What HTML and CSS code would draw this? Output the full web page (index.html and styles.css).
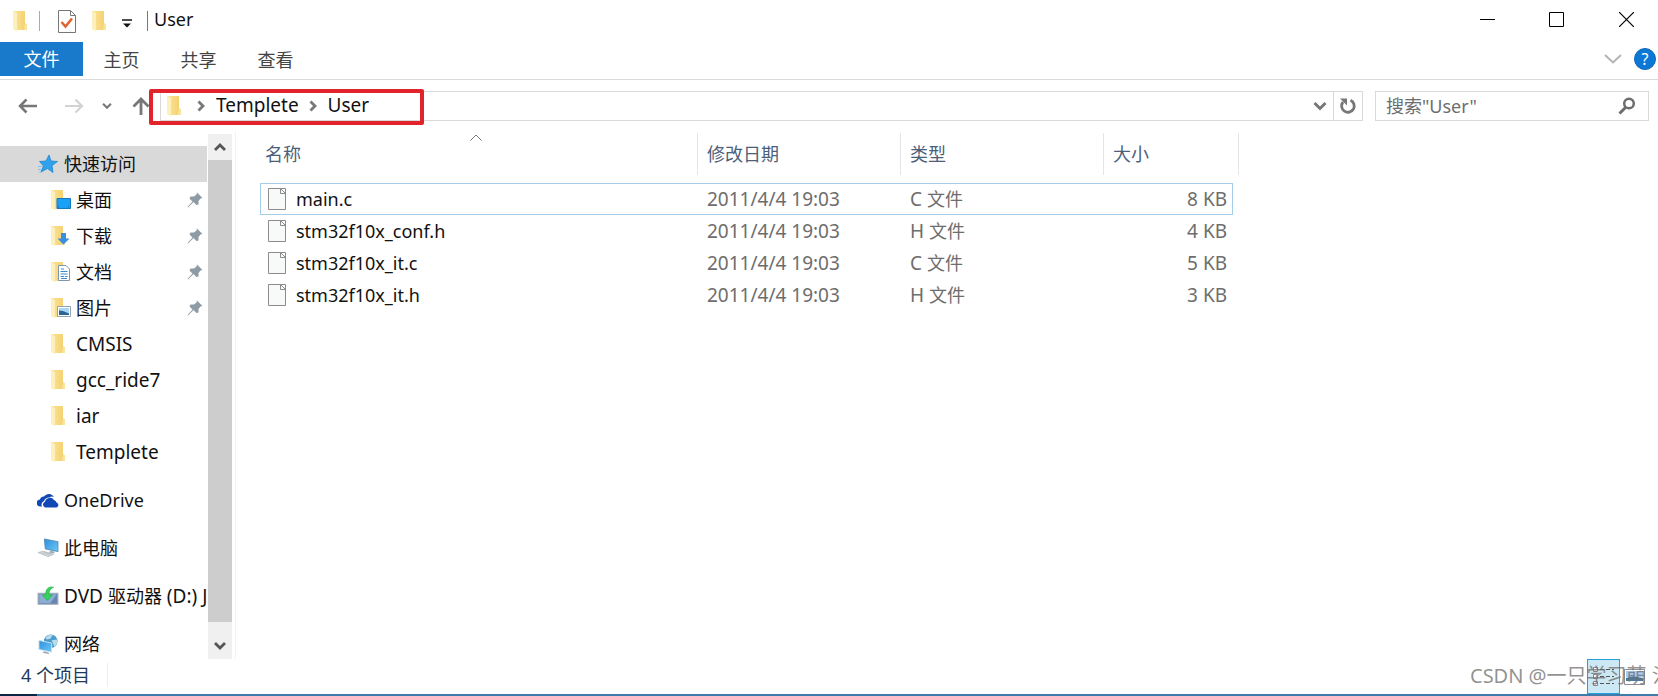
FILE: index.html
```html
<!DOCTYPE html>
<html lang="zh-CN">
<head>
<meta charset="utf-8">
<title>User</title>
<link rel="stylesheet" href="styles.css">
</head>
<body>
<svg class="defs" aria-hidden="true">
  <defs>
    <linearGradient id="gFold" x1="0" x2="1"><stop offset="0" stop-color="#fbe49a"/><stop offset="1" stop-color="#f3cf6b"/></linearGradient>
    <linearGradient id="gBlue" x1="0" x2="1" y1="0" y2="1"><stop offset="0" stop-color="#2f8fdc"/><stop offset="1" stop-color="#6cc8f5"/></linearGradient>
    <symbol id="folder" viewBox="0 0 16 22">
      <path d="M1 1H13V13L15 15V20H4L1 18Z" fill="url(#gFold)"/>
      <path d="M1 1L5 3V21.500L1 19Z" fill="#fdf0bd"/>
      <path d="M13 13L15 15V20H12Z" fill="#fae39a"/>
    </symbol>
    <symbol id="page" viewBox="0 0 18 22">
      <path d="M.5.5H12.500L17.500 5.500V21.500H.5Z" fill="#f8faf9"/>
      <path d="M12.500.5H.5V21.500H17.500V5.500M12.500.5V5.500H17.500ZM12.500.5H17.500V5.500" fill="none" stroke="#8b8b8b"/>
    </symbol>
    <symbol id="pin" viewBox="0 0 16 16">
      <path d="M10 .5L15.500 6L13.500 6.500L11.500 9L11.500 12.500L9.500 13L6.500 10L1 15.500L.5 15L5.500 9.500L2.500 6.500L3.500 4.500L7 4.500L9.500 2.500Z" fill="#8e9ba6"/>
    </symbol>
    <symbol id="chev" viewBox="0 0 12 12"><path d="M3.500 1.500L8 6L3.500 10.500" fill="none" stroke="#777" stroke-width="2.800"/></symbol>
    <symbol id="down" viewBox="0 0 14 10"><path d="M1.500 2L7 7.500L12.500 2" fill="none" stroke="currentColor" stroke-width="3"/></symbol>
  </defs>
</svg>
<div class="window">
  <header class="titlebar">
    <svg class="fold"><use href="#folder"/></svg>
    <span class="bar"></span>
    <button class="plain check" aria-label="属性"><svg width="18" height="23" viewBox="0 0 18 23"><path d="M.5.5H12.500L17.500 5.500V22.500H.5Z" fill="#fff" stroke="#777"/><path d="M12.500.5V5.500H17.500" fill="none" stroke="#777"/><path d="M3.500 12L7.500 16.500L14 8.500" fill="none" stroke="#e2622f" stroke-width="2.500"/></svg></button>
    <button class="plain newf" aria-label="新建文件夹"><svg class="fold"><use href="#folder"/></svg></button>
    <button class="plain custom" aria-label="自定义快速访问工具栏"><svg width="10" height="9" viewBox="0 0 10 9"><path d="M0 1H10" stroke="#111" stroke-width="1.500"/><path d="M1 4.500H9L5 8.500Z" fill="#111"/></svg></button>
    <span class="bar dark"></span>
    <h1>User</h1>
    <div class="caption">
      <button class="plain min" aria-label="最小化"><svg width="15" height="15"><path d="M0 7.500H15" stroke="#000"/></svg></button>
      <button class="plain max" aria-label="最大化"><svg width="15" height="15"><path d="M.5.5H14.500V14.500H.5Z" fill="none" stroke="#000"/></svg></button>
      <button class="plain close" aria-label="关闭"><svg width="15" height="15"><path d="M0 0L15 15M15 0L0 15" stroke="#000" stroke-width="1.200"/></svg></button>
    </div>
  </header>
  <nav class="ribbon">
    <button class="tab file">文件</button>
    <button class="tab">主页</button>
    <button class="tab">共享</button>
    <button class="tab">查看</button>
    <button class="plain expand" aria-label="展开功能区"><svg width="18" height="10" viewBox="0 0 18 10"><path d="M1 1L9 8.500L17 1" fill="none" stroke="#b4b4b4" stroke-width="2"/></svg></button>
    <button class="help" aria-label="帮助">?</button>
  </nav>
  <div class="navbar">
    <button class="plain back" aria-label="后退"><svg width="20" height="16" viewBox="0 0 20 16"><path d="M19 8H2M8.500 1.500L2 8L8.500 14.500" fill="none" stroke="#777" stroke-width="2.500"/></svg></button>
    <button class="plain fwd" aria-label="前进"><svg width="20" height="16" viewBox="0 0 20 16"><path d="M1 8H18M11.500 1.500L18 8L11.500 14.500" fill="none" stroke="#d2d2d2" stroke-width="2.200"/></svg></button>
    <button class="plain recent" aria-label="最近浏览的位置"><svg width="10" height="8" viewBox="0 0 14 10"><use href="#down"/></svg></button>
    <button class="plain up" aria-label="上移"><svg width="18" height="18" viewBox="0 0 18 18"><path d="M9 18V2.500M1.500 9.500L9 2L16.500 9.500" fill="none" stroke="#777" stroke-width="2.800"/></svg></button>
    <div class="address">
      <svg class="fold"><use href="#folder"/></svg>
      <svg class="chev"><use href="#chev"/></svg>
      <button class="plain crumb">Templete</button>
      <svg class="chev"><use href="#chev"/></svg>
      <button class="plain crumb">User</button>
      <button class="plain drop" aria-label="以前的位置"><svg width="14" height="10"><use href="#down"/></svg></button>
      <button class="plain refresh" aria-label="刷新"><svg width="18" height="18" viewBox="0 0 18 18"><path d="M11.500 3.200A6.300 6.300 0 1 1 4 5" fill="none" stroke="#777" stroke-width="2.800"/><path d="M1 1.500H8V8.500Z" fill="#777"/></svg></button>
      <span class="mark"></span>
    </div>
    <label class="search">
      <input type="text" placeholder="搜索&quot;User&quot;" aria-label="搜索">
      <svg width="18" height="18" viewBox="0 0 18 18"><circle cx="11" cy="6.500" r="4.800" fill="none" stroke="#6d6d6d" stroke-width="2.500"/><path d="M7.500 10.500L1.500 16.500" stroke="#6d6d6d" stroke-width="3"/></svg>
    </label>
  </div>
  <main class="body">
    <aside class="side">
      <ul class="tree">
        <li><a href="#" class="root sel"><svg viewBox="0 0 20 20"><path d="M11 1L13 7L19.500 7.500L14 11.500L15 18.500L9.500 14.500L3 18L5.500 12L1.500 7.500L8 7Z" fill="#2ea3ec" stroke="#1c84d0" stroke-width=".8"/><path d="M0 12.500H4M0 15.500H3.500M1 18H3" stroke="#7cc4ef"/></svg>快速访问</a></li>
        <li><a href="#"><svg viewBox="0 0 20 20"><use href="#folder" x="-1" y="-1" width="16" height="22"/><path d="M6 8.500H19.500V18.500H6Z" fill="#1aa0f4" stroke="#1479bd"/><path d="M7 17H18" stroke="#0d5f9c" stroke-dasharray="1 9"/></svg>桌面<svg class="pin"><use href="#pin"/></svg></a></li>
        <li><a href="#"><svg viewBox="0 0 20 20"><use href="#folder" x="-1" y="-1" width="16" height="22"/><path d="M10 7H15V12.500H18.500L12.500 18.500L6.500 12.500H10Z" fill="#3a8ede"/></svg>下载<svg class="pin"><use href="#pin"/></svg></a></li>
        <li><a href="#"><svg viewBox="0 0 20 20"><use href="#folder" x="-1" y="-1" width="16" height="22"/><path d="M7.500 3.500H15L18.500 7V18.500H7.500Z" fill="#fff" stroke="#7e97aa"/><path d="M10 7H13M9.500 9.500H16.500M9.500 12H16.500M9.500 14.500H13M14 14.500H16.500M10 16.500H16" stroke="#3b8bd0"/></svg>文档<svg class="pin"><use href="#pin"/></svg></a></li>
        <li><a href="#"><svg viewBox="0 0 20 20"><use href="#folder" x="-1" y="-1" width="16" height="22"/><path d="M6.500 8.500H19.500V18.500H6.500Z" fill="#fff" stroke="#93a2ae"/><path d="M8 10H18V17H8Z" fill="#a9d6f5"/><path d="M8 12.500L12 13L18 15.500V17H8Z" fill="#2a6494"/></svg>图片<svg class="pin"><use href="#pin"/></svg></a></li>
        <li><a href="#"><svg viewBox="0 0 20 20"><use href="#folder" x="-1" y="-1" width="16" height="22"/></svg><span class="latin">CMSIS</span></a></li>
        <li><a href="#"><svg viewBox="0 0 20 20"><use href="#folder" x="-1" y="-1" width="16" height="22"/></svg><span class="latin">gcc_ride7</span></a></li>
        <li><a href="#"><svg viewBox="0 0 20 20"><use href="#folder" x="-1" y="-1" width="16" height="22"/></svg><span class="latin">iar</span></a></li>
        <li><a href="#"><svg viewBox="0 0 20 20"><use href="#folder" x="-1" y="-1" width="16" height="22"/></svg><span class="latin">Templete</span></a></li>
        <li class="group"><a href="#" class="root"><svg viewBox="0 0 22 16"><path d="M5 14.500H3.500A3.500 3.500 0 0 1 3 7.500A4 4 0 0 1 7 4.500A6 6 0 0 1 17 5A4 4 0 0 0 12.500 5.500A5.500 5.500 0 0 0 7 9A4 4 0 0 0 5 14.500Z" fill="#1148b5"/><path d="M8.500 15.500A3 3 0 0 1 8 9.700A5 5 0 0 1 17 8A3.500 3.500 0 0 1 19.500 10.500A2.600 2.600 0 0 1 19.500 15.500Z" fill="#1148b5"/></svg><span>OneDrive</span></a></li>
        <li class="group"><a href="#" class="root"><svg viewBox="0 0 22 22"><path d="M7 1L22 4V15L8 12Z" fill="url(#gBlue)" stroke="#4a7fa6" stroke-width=".8"/><path d="M14 14L18 15V17L12 16Z" fill="#9aa6ae"/><path d="M0 16L6 14.500L17 18L11 20.500Z" fill="#e2e5e7" stroke="#a6adb2" stroke-width=".7"/><path d="M3 16L13 19M6 15.500L15 18" stroke="#a6adb2" stroke-width=".7"/></svg>此电脑</a></li>
        <li class="group"><a href="#" class="root"><svg viewBox="0 0 20 18"><path d="M1 6.500H19V16.500H1Z" fill="#6685b0" stroke="#a3adb9"/><path d="M2 7.500H18L12 15.500H2Z" fill="#8bacd3"/><path d="M15 1C10.500 0 7.500 3 8 8H5L9.500 13L14 8H11C10.500 5 12 2.500 15 1Z" fill="#35d45a" stroke="#1fae43" stroke-width=".6"/></svg><span class="latin">DVD <span class="zh">驱动器</span> (D:) J</span></a></li>
        <li class="group"><a href="#" class="root"><svg viewBox="0 0 22 22"><circle cx="14" cy="8" r="7.500" fill="#4a9ccc"/><path d="M8 4Q12 0 16 1L14 5L10 6ZM15 7L21 6Q22 11 18 14Z" fill="#b8dcec"/><path d="M1 7L15 10V20L1 17Z" fill="url(#gBlue)" stroke="#d3e6f2"/><path d="M7 19L12 20.500V22L5 20.500Z" fill="#9aa6ae"/></svg>网络</a></li>
      </ul>
      <div class="scroll">
        <button class="plain" aria-label="向上滚动"><svg width="12" height="10" viewBox="0 0 12 10"><path d="M1 8L6 3L11 8" fill="none" stroke="#555" stroke-width="2.800"/></svg></button>
        <span class="thumb"></span>
        <button class="plain low" aria-label="向下滚动"><svg width="12" height="10" viewBox="0 0 12 10"><path d="M1 2L6 7L11 2" fill="none" stroke="#555" stroke-width="2.800"/></svg></button>
      </div>
    </aside>
    <section class="files">
      <table>
        <thead><tr><th class="c1">名称<svg class="sort" width="12" height="7" viewBox="0 0 12 7"><path d="M.5 6.500L6 1L11.500 6.500" fill="none" stroke="#777"/></svg></th><th class="c2">修改日期</th><th class="c2">类型</th><th class="c3">大小</th><th class="rest"></th></tr></thead>
        <tbody>
          <tr class="cur"><td class="name"><svg class="page"><use href="#page"/></svg>main.c</td><td>2011/4/4 19:03</td><td>C <span class="zh">文件</span></td><td class="size">8 KB</td></tr>
          <tr><td class="name"><svg class="page"><use href="#page"/></svg>stm32f10x_conf.h</td><td>2011/4/4 19:03</td><td>H <span class="zh">文件</span></td><td class="size">4 KB</td></tr>
          <tr><td class="name"><svg class="page"><use href="#page"/></svg>stm32f10x_it.c</td><td>2011/4/4 19:03</td><td>C <span class="zh">文件</span></td><td class="size">5 KB</td></tr>
          <tr><td class="name"><svg class="page"><use href="#page"/></svg>stm32f10x_it.h</td><td>2011/4/4 19:03</td><td>H <span class="zh">文件</span></td><td class="size">3 KB</td></tr>
        </tbody>
      </table>
    </section>
  </main>
  <footer class="status">
    <span class="count">4 个项目</span>
    <div class="views">
      <button class="view on" aria-label="详细信息"><svg width="24" height="22" viewBox="0 0 24 22"><path d="M1.500 1.500H5.500V5.500H1.500ZM1.500 8.500H5.500V12.500H1.500ZM1.500 15.500H5.500V19.500H1.500Z" fill="#fff" stroke="#8c8078"/><path d="M8 3.500H22M8 10.500H22M8 17.500H22" stroke="#555" stroke-dasharray="4 2"/></svg></button>
      <button class="view" aria-label="大图标"><svg width="21" height="16" viewBox="0 0 21 16"><path d="M.5.5H20.500V15.500H.5Z" fill="#fff" stroke="#8b9099"/><path d="M2 2H19V8H2Z" fill="#a9c9f5"/><path d="M2 9Q8 6 19 9V12H2Z" fill="#4a7ba3"/></svg></button>
    </div>
    <span class="watermark">CSDN @一只学习萌 氵</span>
  </footer>
</div>
</body>
</html>
```
FILE: styles.css
```css
* { box-sizing: border-box; }
body {
  margin: 0;
  background: #fff;
  color: #111;
  font: 18px/24px "Noto Sans", "Noto Sans CJK SC", sans-serif;
}
.defs { position: absolute; width: 0; height: 0; }
svg { display: block; flex: none; }
button, input { font: inherit; color: inherit; }
.plain { display: flex; align-items: center; justify-content: center; padding: 0; border: 0; background: none; }
.window { display: flex; flex-direction: column; height: 100vh; overflow: hidden; }
.window::after { content: ""; flex: none; height: 2px; background: linear-gradient(90deg, #0b2545 37px, #3f7cac 37px); }
.fold { width: 16px; height: 22px; }

.titlebar { display: flex; align-items: center; height: 42px; padding-left: 12px; }
.bar { width: 1px; height: 20px; margin-left: 11px; background: #aaa; }
.bar.dark { margin-left: 15px; background: #777; }
.check { margin-left: 18px; }
.newf { margin-left: 15px; }
.custom { margin: 4px 0 0 15px; }
h1 { margin: 0 0 4px 6px; font-size: 18px; font-weight: 400; line-height: 24px; }
.caption { display: flex; height: 38px; margin: 0 0 4px auto; }
.min { width: 62px; }
.max { width: 76px; }
.close { width: 64px; }

.ribbon { display: flex; align-items: center; height: 38px; padding-bottom: 4px; border-bottom: 1px solid #dadbdc; }
.tab { width: 77px; height: 34px; padding: 2px 0 0; border: 0; background: none; color: #444; }
.tab.file { width: 83px; padding: 0; background: #1979ca; color: #fff; }
.expand { margin-left: auto; }
.help { width: 22px; height: 22px; margin: 0 2px 0 12px; padding: 0; border: 1px solid #1565b4; border-radius: 50%; background: #0b78d8; color: #fff; font-size: 16px; line-height: 20px; }

.navbar { display: flex; align-items: center; height: 51px; padding: 0 9px 0 18px; }
.fwd { margin-left: 26px; }
.recent { margin-left: 18px; color: #777; }
.up { margin-left: 20px; }
.address { position: relative; display: flex; flex: 1; align-items: center; height: 30px; margin-left: 10px; padding-left: 5px; border: 1px solid #d9d9d9; }
.chev { width: 12px; height: 12px; margin: 0 9px 0 13px; }
.crumb + .chev { margin: 0 9px 0 8px; }
.crumb { height: 28px; padding-bottom: 2px; font-size: 19px; }
.drop { height: 28px; margin: 0 6px 0 auto; color: #777; }
.refresh { width: 29px; height: 28px; border-left: 1px solid #d9d9d9; }
.mark { position: absolute; left: -12px; top: -3px; width: 275px; height: 36px; border: 4px solid #e1232b; border-radius: 2px; }
.search { display: flex; align-items: center; width: 274px; height: 30px; margin-left: 12px; padding: 0 12px 0 10px; border: 1px solid #d9d9d9; }
.search input { flex: 1; min-width: 0; padding: 0; border: 0; outline: 0; background: none; }
.search input::placeholder { color: #6d6d6d; opacity: 1; }

.body { display: flex; flex: 1; min-height: 0; }
.side { display: flex; width: 236px; padding-top: 3px; border-right: 1px solid #f3f3f3; }
.tree { flex: 1; min-width: 0; margin: 0; padding: 12px 1px 0 0; overflow: hidden; list-style: none; }
.tree a { display: flex; align-items: center; gap: 5px; height: 36px; padding-left: 51px; overflow: hidden; color: inherit; text-decoration: none; white-space: nowrap; }
.tree a.root { padding-left: 37px; }
.tree a > svg { width: 20px; height: 20px; }
.tree a.root > svg { width: 22px; }
.tree a > svg.pin { width: 16px; height: 16px; margin: 0 4px 0 auto; }
.tree .group { margin-top: 12px; }
.sel { background: #d9d9d9; }
.latin { font-size: 19px; }
.scroll { display: flex; flex-direction: column; width: 24px; margin-right: 3px; background: #cdcdcd; }
.scroll .plain { height: 26px; background: #f0f0f0; }
.scroll .low { height: 37px; padding-top: 10px; }
.thumb { flex: 1; }

.files { flex: 1; min-width: 0; padding: 2px 0 0 24px; }
table { border-collapse: separate; border-spacing: 0; table-layout: fixed; width: 979px; }
th { position: relative; height: 42px; padding: 0 0 0 9px; border-right: 1px solid #e5e5e5; color: #4c607a; font-weight: 400; text-align: left; }
.c1 { width: 438px; padding-left: 5px; }
.c2 { width: 203px; }
.c3 { width: 129px; border-right: 0; }
.rest { padding: 0; }
.sort { position: absolute; left: 210px; top: 1px; }
tbody::before { content: ""; display: block; height: 8px; }
td { height: 32px; padding: 0 0 0 9px; color: #6d6d6d; font-size: 19px; }
.name { display: flex; align-items: center; gap: 10px; padding-left: 8px; color: #111; font-size: 18px; }
.size { padding-right: 6px; text-align: right; }
.page { width: 18px; height: 22px; }
.zh { font-size: 18px; }
.cur td { border: solid #a3cde8; border-width: 1px 0; }
.cur .name { padding-left: 7px; border-left-width: 1px; }
.cur .size { padding-right: 5px; border-right-width: 1px; }

.status { position: relative; display: flex; align-items: center; height: 35px; padding-left: 21px; color: #1e395b; }
.count { margin-bottom: 3px; padding-right: 17px; border-right: 1px solid #eee; }
.views { display: flex; height: 35px; margin-left: auto; padding-right: 9px; }
.view { display: flex; align-items: center; justify-content: center; width: 29px; padding: 0; border: 0; background: none; }
.view.on { width: 33px; border: 1px solid #26a0da; background: #cce8f4; }
.watermark { position: absolute; left: calc(100% - 188px); top: 5px; width: 188px; overflow: hidden; color: rgba(110, 110, 110, .75); font-size: 20px; white-space: nowrap; }
```
